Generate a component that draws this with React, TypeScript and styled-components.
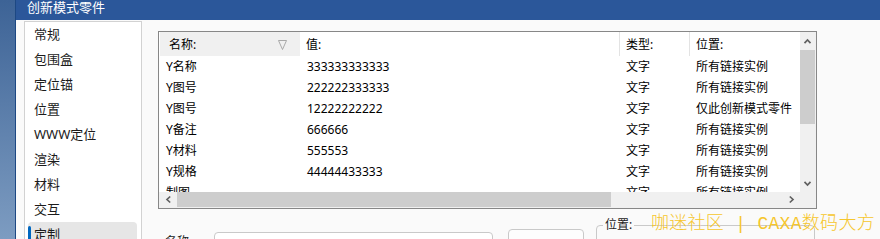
import styled, { createGlobalStyle } from "styled-components"

const FONT = `"Noto Sans", "Noto Sans CJK SC", sans-serif`

const GlobalStyle = createGlobalStyle`
  html, body {
    margin: 0;
    padding: 0;
  }
  body {
    width: 880px;
    height: 239px;
    overflow: hidden;
    background: #5a7fb0;
    font-family: ${FONT};
  }
`

interface Row {
  name: string
  value: string
  type: string
  place: string
}

const rows: Row[] = [
  { name: "Y名称", value: "333333333333", type: "文字", place: "所有链接实例" },
  { name: "Y图号", value: "222222333333", type: "文字", place: "所有链接实例" },
  { name: "Y图号", value: "12222222222", type: "文字", place: "仅此创新模式零件" },
  { name: "Y备注", value: "666666", type: "文字", place: "所有链接实例" },
  { name: "Y材料", value: "555553", type: "文字", place: "所有链接实例" },
  { name: "Y规格", value: "44444433333", type: "文字", place: "所有链接实例" },
  { name: "制图", value: "", type: "文字", place: "所有链接实例" },
]

const navItems = ["常规", "包围盒", "定位锚", "位置", "WWW定位", "渲染", "材料", "交互", "定制"]

type Dir = "up" | "down" | "left" | "right"

const rotation: Record<Dir, number> = { up: 0, right: 90, down: 180, left: 270 }

const Chevron = ({ dir }: { dir: Dir }) => (
  <svg width="9" height="9" viewBox="0 0 9 9" style={{ transform: `rotate(${rotation[dir]}deg)` }}>
    <polyline points="1.5,6.2 4.5,3 7.5,6.2" fill="none" stroke="#606060" strokeWidth="1.7" />
  </svg>
)

const App = () => {
  return (
    <Screen>
      <GlobalStyle />
      <Desktop />
      <Dialog>
        <TitleBar>创新模式零件</TitleBar>
        <Body>
          <Nav>
            {navItems.map((item, i) => (
              <NavItem key={item} $selected={i === navItems.length - 1}>
                {item}
              </NavItem>
            ))}
          </Nav>
          <Main>
            <Table>
              <Content>
                <HeaderRow>
                  <HeaderCell $sorted $pad={9}>
                    名称:
                    <svg width="9" height="10" viewBox="0 0 9 10">
                      <polygon points="0.5,0.5 8.5,0.5 4.5,9.5" fill="none" stroke="#a0a0a0" strokeWidth="0.9" />
                    </svg>
                  </HeaderCell>
                  <HeaderCell $pad={6}>值:</HeaderCell>
                  <HeaderCell $pad={6} $divider>类型:</HeaderCell>
                  <HeaderCell $pad={6} $divider>位置:</HeaderCell>
                </HeaderRow>
                {rows.map((row, i) => (
                  <DataRow key={i}>
                    <Cell>{row.name}</Cell>
                    <Cell>{row.value}</Cell>
                    <Cell>{row.type}</Cell>
                    <Cell>{row.place}</Cell>
                  </DataRow>
                ))}
              </Content>
              <VScroll>
                <ArrowBox>
                  <Chevron dir="up" />
                </ArrowBox>
                <VThumb />
                <Spacer />
                <ArrowBox>
                  <Chevron dir="down" />
                </ArrowBox>
              </VScroll>
              <HScroll>
                <ArrowBox>
                  <Chevron dir="left" />
                </ArrowBox>
                <HThumb />
                <Spacer />
                <ArrowBox>
                  <Chevron dir="right" />
                </ArrowBox>
              </HScroll>
              <Corner />
            </Table>
            <FormRow>
              <FieldLabel>名称</FieldLabel>
              <TextInput />
              <FormButton>选择...</FormButton>
              <GroupBox>
                <Legend>位置:</Legend>
              </GroupBox>
            </FormRow>
          </Main>
          <Watermark>咖迷社区 | CAXA数码大方</Watermark>
        </Body>
      </Dialog>
    </Screen>
  )
}

const Screen = styled.div`
  display: flex;
  width: 880px;
  height: 239px;
  overflow: hidden;
`

const Desktop = styled.div`
  flex: none;
  width: 15px;
  background: linear-gradient(#3d6396, #7d9cc1);
`

const Dialog = styled.div`
  flex: 1;
  min-width: 0;
  display: flex;
  flex-direction: column;
  border-left: 1px solid #1d4883;
`

const TitleBar = styled.div`
  flex: none;
  height: 20px;
  padding-left: 11px;
  background: #2b579a;
  color: #fff;
  font-size: 13px;
  line-height: 15px;
`

const Body = styled.div`
  position: relative;
  flex: 1;
  min-height: 0;
  display: flex;
  background: #fafafa;
  overflow: hidden;
`

const Nav = styled.div`
  flex: none;
  width: 116px;
  margin: 1px 0 0 8px;
  border: 1px solid #d2d2d2;
  border-bottom: none;
  background: #fff;
`

const NavItem = styled.div<{ $selected?: boolean }>`
  position: relative;
  height: 25px;
  line-height: 25px;
  margin: ${(p) => (p.$selected ? "0 4px 0 3px" : "0")};
  padding-left: ${(p) => (p.$selected ? "6px" : "9px")};
  border-radius: 4px;
  background: ${(p) => (p.$selected ? "#e6e6e6" : "transparent")};
  color: #1b1b1b;
  font-size: 13px;

  &::before {
    content: "";
    display: ${(p) => (p.$selected ? "block" : "none")};
    position: absolute;
    left: 0;
    top: 4px;
    width: 3px;
    height: 17px;
    border-radius: 2px;
    background: #0067c0;
  }
`

const Main = styled.div`
  flex: none;
  display: flex;
  flex-direction: column;
  padding: 11px 0 0 16px;
`

const Table = styled.div`
  width: 657px;
  height: 176px;
  border: 1px solid #878787;
  background: #fff;
  display: grid;
  grid-template-columns: 641px 16px;
  grid-template-rows: 160px 16px;
`

const Content = styled.div`
  overflow: hidden;
`

const columns = "141px 319px 70px 111px"

const HeaderRow = styled.div`
  display: grid;
  grid-template-columns: ${columns};
  height: 24px;
`

const HeaderCell = styled.div<{ $sorted?: boolean; $divider?: boolean; $pad: number }>`
  display: flex;
  align-items: center;
  justify-content: space-between;
  padding: 0 13px 0 ${(p) => p.$pad}px;
  margin-left: ${(p) => (p.$sorted ? "1px" : "0")};
  background: ${(p) => (p.$sorted ? "#f0f0f0" : "transparent")};
  border-left: ${(p) => (p.$divider ? "1px solid #e3e3e3" : "none")};
  color: #000;
  font-size: 12px;

  svg {
    margin-top: 1px;
  }
`

const DataRow = styled.div`
  display: grid;
  grid-template-columns: ${columns};
  height: 21px;
  line-height: 21px;
`

const Cell = styled.div`
  padding-left: 7px;
  white-space: nowrap;
  overflow: hidden;
  color: #000;
  font-size: 12px;
`

const VScroll = styled.div`
  display: flex;
  flex-direction: column;
  background: #f0f0f0;
`

const HScroll = styled.div`
  display: flex;
  background: #f0f0f0;
`

const ArrowBox = styled.div`
  flex: none;
  width: 18px;
  height: 18px;
  display: flex;
  align-items: center;
  justify-content: center;

  ${VScroll} & {
    width: 15px;
  }
  ${HScroll} & {
    height: 15px;
  }
`

const VThumb = styled.div`
  flex: none;
  width: 15px;
  height: 74px;
  background: #cdcdcd;
`

const HThumb = styled.div`
  flex: none;
  width: 434px;
  height: 15px;
  background: #cdcdcd;
`

const Spacer = styled.div`
  flex: 1;
`

const Corner = styled.div`
  background: #f0f0f0;
`

const FormRow = styled.div`
  display: flex;
  align-items: flex-start;
`

const FieldLabel = styled.div`
  flex: none;
  width: 49px;
  margin-top: 25px;
  padding-left: 7px;
  color: #1b1b1b;
  font-size: 12px;
  line-height: 16px;
`

const TextInput = styled.div`
  flex: none;
  width: 277px;
  height: 24px;
  margin-top: 23px;
  border: 1px solid #c9c9c9;
  border-radius: 4px;
  background: #fff;
`

const FormButton = styled.div`
  flex: none;
  width: 76px;
  height: 24px;
  margin: 20px 0 0 15px;
  border: 1px solid #c9c9c9;
  border-radius: 4px;
  background: #fdfdfd;
  color: #1b1b1b;
  font-size: 12px;
  line-height: 16px;
  padding-top: 9px;
  box-sizing: border-box;
  text-align: center;
`

const GroupBox = styled.div`
  position: relative;
  flex: none;
  width: 217px;
  height: 40px;
  margin: 16px 0 0 12px;
  border: 1px solid #c9c9c9;
  border-radius: 4px;
`

const Legend = styled.span`
  position: absolute;
  left: 6px;
  top: -9px;
  padding: 0 2px;
  background: #fafafa;
  color: #1b1b1b;
  font-size: 12px;
  line-height: 16px;
`

const Watermark = styled.div`
  position: absolute;
  right: 5px;
  top: 193px;
  color: #f6c62c;
  font-family: "Liberation Mono", "Noto Sans CJK SC", monospace;
  font-size: 18px;
  line-height: 22px;
  letter-spacing: 0.3px;
  font-weight: 300;
  white-space: pre;
  pointer-events: none;
`

export default App
